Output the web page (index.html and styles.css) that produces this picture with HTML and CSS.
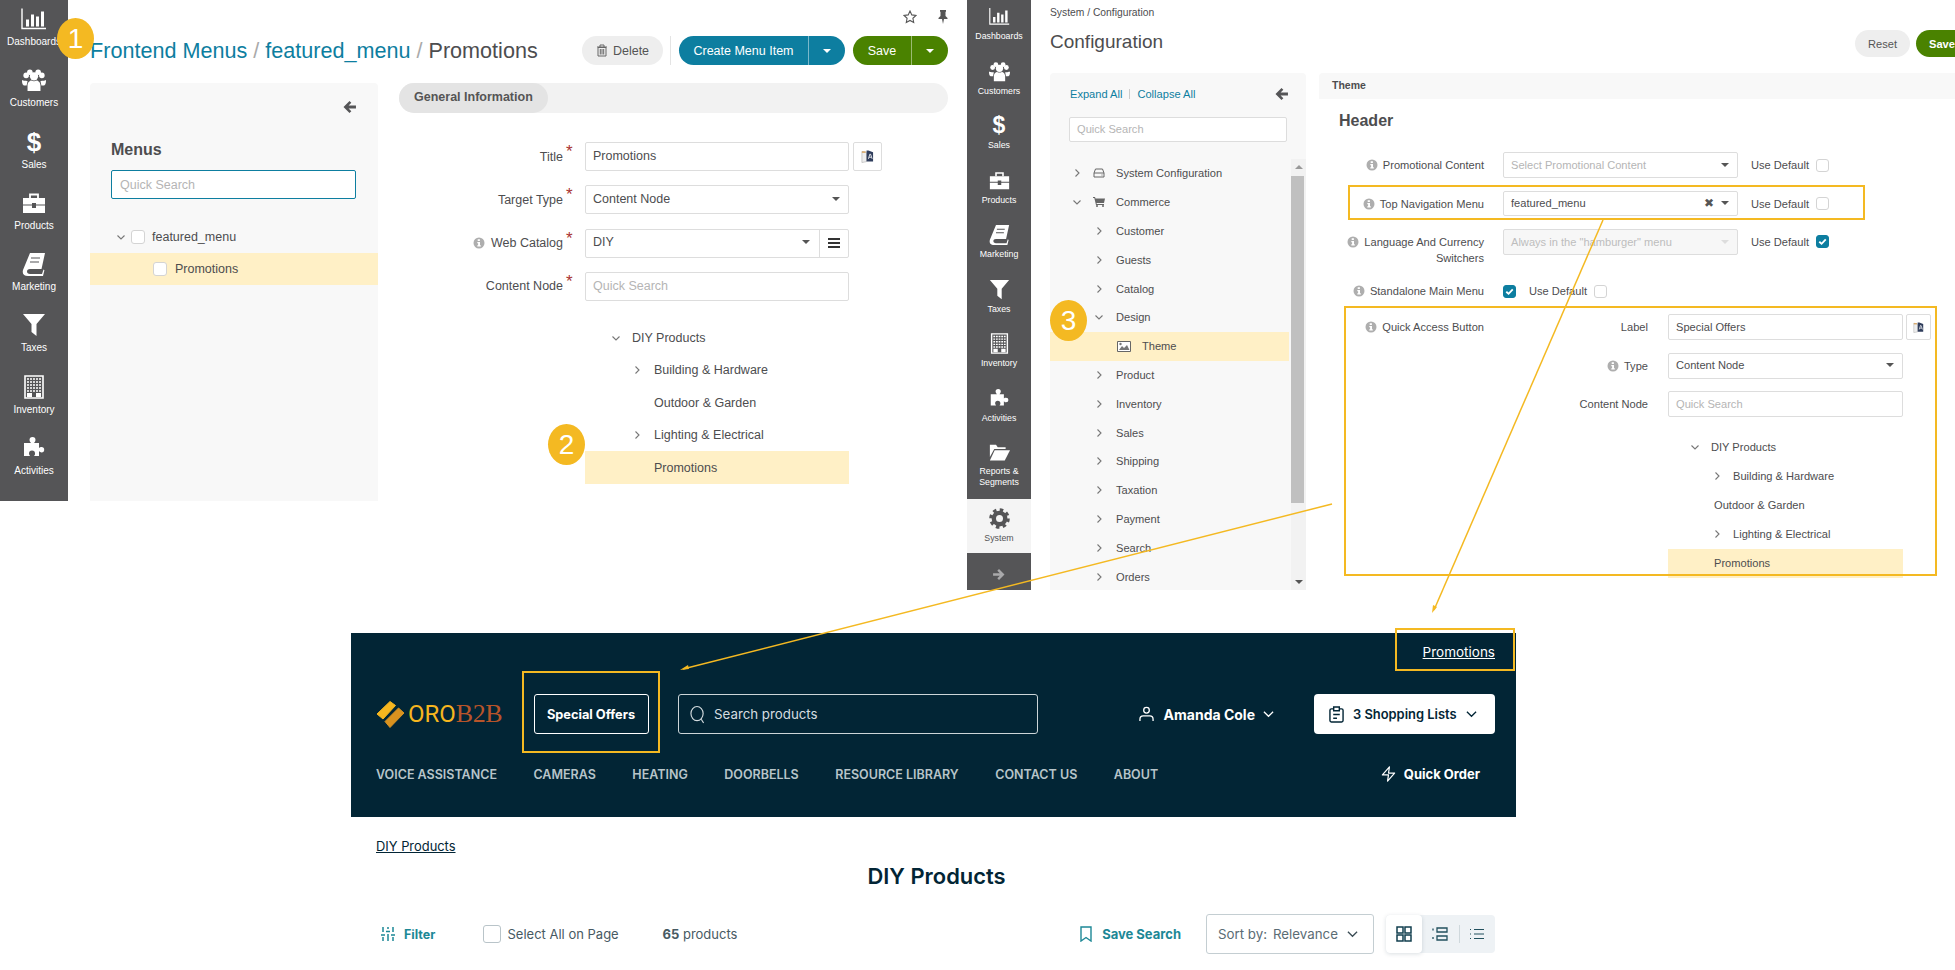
FILE: index.html
```html
<!DOCTYPE html>
<html lang="en">
<head>
<meta charset="utf-8">
<title>Frontend menus</title>
<link rel="stylesheet" href="styles.css">
</head>
<body>
<svg class="sprite" aria-hidden="true">
  <symbol id="i-bars" viewBox="0 0 26 21"><path d="M1 0v20h24" fill="none" stroke="currentColor" stroke-width="1.4"/><path d="M5 11h3v7H5zM10 6h3v12h-3zM15 8h3v10h-3zM20 3h3v15h-3z" fill="currentColor"/></symbol>
  <symbol id="i-users" viewBox="0 0 26 24"><g fill="currentColor"><circle cx="4.5" cy="7" r="3"/><circle cx="21.500" cy="7" r="3"/><circle cx="8.500" cy="3.500" r="3"/><circle cx="17.500" cy="3.500" r="3"/><circle cx="13" cy="8" r="4.500"/><path d="M0 12c1 1 6 1 6 1l-1 5H2c-2-1-2-4-2-6zM26 12c-1 1-6 1-6 1l1 5h3c2-1 2-4 2-6zM6 24v-6c0-4 3-5.500 4-5.500 2 1 4 1 6 0 1 0 4 1.500 4 5.500v6z"/></g></symbol>
  <symbol id="i-case" viewBox="0 0 24 20"><g fill="currentColor"><path d="M1 5h22v6.500H14V10h-4v1.500H1z"/><path d="M1 12.500h9V15h4v-2.500h9V20H1z"/></g><path d="M8 5V1.500h8V5" fill="none" stroke="currentColor" stroke-width="1.800"/></symbol>
  <symbol id="i-book" viewBox="0 0 24 24"><path d="M8 1h15l-3.500 16H8c-2 0-3 1-3 2.500S6 22 8 22h12l1.500-4.500.9.800L21 24H6c-4 0-6-2-5-6z" fill="currentColor"/><path d="M9 6h9M8 10h9" stroke="#555557" stroke-width="1.200"/></symbol>
  <symbol id="i-filter" viewBox="0 0 24 24"><path d="M1 1h22l-8.500 10v12l-5-4v-8z" fill="currentColor"/></symbol>
  <symbol id="i-building" viewBox="0 0 20 24"><path d="M1 1h18v22H1z" fill="#555557" stroke="currentColor" stroke-width="1.600"/><path d="M3 4h14M3 7h14M3 10h14M3 13h14M3 16h14" stroke="currentColor" stroke-width="1.700" stroke-dasharray="2 1"/><path d="M3 18h5v4H3zM12 18h5v4h-5z" fill="currentColor"/></symbol>
  <symbol id="i-puzzle" viewBox="0 0 24 22"><path d="M9 6c-1-1-1.500-2-1.500-3a3 3 0 0 1 6 0c0 1-.5 2-1.500 3h5v5c1-1 1.500-1 2.500-1a2.700 2.700 0 0 1 0 5.400c-1 0-1.500-.4-2.500-1.400v5h-5c1-1 1-1.500 1-2.500a3 3 0 0 0-6 0c0 1 .5 1.500 1 2.500H2V6z" fill="currentColor"/></symbol>
  <symbol id="i-folder" viewBox="0 0 24 20"><path d="M1 1h7l2 3h9v2H6L1 15z" fill="currentColor"/><path d="M6.500 7.500H24L18 19H1z" fill="currentColor"/></symbol>
  <symbol id="i-gear" viewBox="0 0 24 24"><circle cx="12" cy="12" r="6.500" fill="none" stroke="currentColor" stroke-width="5"/><circle cx="12" cy="12" r="10" fill="none" stroke="currentColor" stroke-width="3.500" stroke-dasharray="4 3.850"/></symbol>
  <symbol id="i-back" viewBox="0 0 14 13"><path d="M7 0l2 2-3 3h8v3H6l3 3-2 2-6.500-6.500z" fill="currentColor"/></symbol>
  <symbol id="i-fwd" viewBox="0 0 14 13"><path d="M7 0L5 2l3 3H0v3h8l-3 3 2 2 6.500-6.500z" fill="currentColor"/></symbol>
  <symbol id="i-down" viewBox="0 0 10 10"><path d="M1.500 3.500L5 7l3.500-3.500" fill="none" stroke="currentColor" stroke-width="1.100"/></symbol>
  <symbol id="i-right" viewBox="0 0 10 10"><path d="M3.500 1.500L7 5 3.500 8.500" fill="none" stroke="currentColor" stroke-width="1.100"/></symbol>
  <symbol id="i-info" viewBox="0 0 12 12"><circle cx="6" cy="6" r="5.500" fill="#aeaeae"/><path d="M4.700 2.300h2.200v1.600H4.700zM4.300 5h2.700v3.300h.8v1.200H4.300V8.300h.8V6.200h-.8z" fill="#fff"/></symbol>
  <symbol id="i-check" viewBox="0 0 14 14"><path d="M3.500 7.300L6 9.500l4.500-4.700" fill="none" stroke="#fff" stroke-width="2"/></symbol>
  <symbol id="i-lang" viewBox="0 0 14 15"><path d="M1 2l5 1v10l-5 1z" fill="#eee" stroke="#bbb" stroke-width=".8"/><path d="M1 2h4v1.500H1z" fill="#d9a25a"/><path d="M6 1h2l5 2v10H6z" fill="#2f3d5c"/><path d="M8 10l1.500-5h.8L12 10M8.700 8.300h2.500" fill="none" stroke="#fff" stroke-width=".9"/></symbol>
  <symbol id="i-search" viewBox="0 0 16 20"><ellipse cx="7.500" cy="9" rx="6.500" ry="7.500" fill="none" stroke="currentColor" stroke-width="1.200"/><path d="M12 15l2.500 4" stroke="currentColor" stroke-width="1.200"/></symbol>
  <symbol id="i-user" viewBox="0 0 16 16"><circle cx="8" cy="4" r="3" fill="none" stroke="currentColor" stroke-width="1.400"/><path d="M1 15.500v-2c0-2 1.500-3.500 3.500-3.500h7c2 0 3.500 1.500 3.500 3.500v2" fill="none" stroke="currentColor" stroke-width="1.400"/></symbol>
  <symbol id="i-clip" viewBox="0 0 16 18"><path d="M4.500 3H2.500A1.500 1.500 0 0 0 1 4.500v11A1.500 1.500 0 0 0 2.500 17h11a1.500 1.500 0 0 0 1.500-1.500v-11A1.500 1.500 0 0 0 13.500 3h-2" fill="none" stroke="currentColor" stroke-width="1.500"/><path d="M5 1h6v4H5zM4.500 9h7M4.500 13h4" fill="none" stroke="currentColor" stroke-width="1.500"/></symbol>
  <symbol id="i-bolt" viewBox="0 0 16 17"><path d="M9 1L1.500 9.500H8L7 16l7.500-8.500H8z" fill="none" stroke="currentColor" stroke-width="1.300" stroke-linejoin="round"/></symbol>
  <symbol id="i-sliders" viewBox="0 0 16 16"><path d="M3 1v5M3 11v4M8 1v2M8 8v7M13 1v5M13 11v4M1 9h4M6 5.500h4M11 9h4" fill="none" stroke="currentColor" stroke-width="1.500"/></symbol>
  <symbol id="i-mark" viewBox="0 0 12 16"><path d="M1 1h10v14l-5-3.500L1 15z" fill="none" stroke="currentColor" stroke-width="1.400"/></symbol>
  <symbol id="i-chev" viewBox="0 0 12 8"><path d="M1 1.500l5 5 5-5" fill="none" stroke="currentColor" stroke-width="1.400"/></symbol>
  <symbol id="i-grid" viewBox="0 0 16 16"><path d="M1 1h6v6H1zM9 1h6v6H9zM1 9h6v6H1zM9 9h6v6H9z" fill="none" stroke="currentColor" stroke-width="1.500"/></symbol>
  <symbol id="i-rows" viewBox="0 0 16 14"><path d="M1 1.500v2M1 10v2M5 1h10v4H5zM5 9h10v4H5z" fill="none" stroke="currentColor" stroke-width="1.300"/></symbol>
  <symbol id="i-list" viewBox="0 0 16 12"><path d="M1 1.500h1M1 6h1M1 10.500h1M5 1.500h10M5 6h10M5 10.500h10" fill="none" stroke="currentColor" stroke-width="1.200"/></symbol>
</svg>

<div class="canvas">

  <section class="shot shot-menus">
    <nav class="rail rail-a">
      <a class="rail-item"><svg class="ri ri-bars"><use href="#i-bars"/></svg><span>Dashboards</span></a>
      <a class="rail-item"><svg class="ri"><use href="#i-users"/></svg><span>Customers</span></a>
      <a class="rail-item"><span class="ri dollar">$</span><span>Sales</span></a>
      <a class="rail-item"><svg class="ri"><use href="#i-case"/></svg><span>Products</span></a>
      <a class="rail-item"><svg class="ri"><use href="#i-book"/></svg><span>Marketing</span></a>
      <a class="rail-item"><svg class="ri"><use href="#i-filter"/></svg><span>Taxes</span></a>
      <a class="rail-item"><svg class="ri"><use href="#i-building"/></svg><span>Inventory</span></a>
      <a class="rail-item"><svg class="ri"><use href="#i-puzzle"/></svg><span>Activities</span></a>
    </nav>
    <div class="menus-main">
      <div class="page-tools">
        <svg class="tool-star" viewBox="0 0 14 14"><path d="M7 1l1.800 3.900 4.200.5-3.100 2.900.8 4.200L7 10.400 3.300 12.500l.8-4.200L1 5.400l4.200-.5z" fill="none" stroke="#555" stroke-width="1.100"/></svg>
        <svg class="tool-pin" viewBox="0 0 10 14"><path d="M2 0h6v1.500L7.500 2v4l2 2v1H6l-1 5-1-5H.5V8l2-2V2L2 1.500z" fill="#555"/></svg>
      </div>
      <header class="menus-head">
        <h1 class="crumb-title"><a>Frontend Menus</a> <i>/</i> <a>featured_menu</a> <i>/</i> Promotions</h1>
        <div class="actions">
          <button class="btn btn-delete"><svg class="trash" viewBox="0 0 12 13"><path d="M1 3h10M4 3V1h4v2M2 3.500h8V12H2zM4.300 5v5.500M6 5v5.500M7.700 5v5.500" fill="none" stroke="#666" stroke-width="1"/></svg>Delete</button>
          <span class="action-sep"></span>
          <div class="split split-teal split-create"><span class="split-main">Create Menu Item</span><span class="split-caret"><b class="caret caret-white"></b></span></div>
          <div class="split split-green split-save"><span class="split-main">Save</span><span class="split-caret"><b class="caret caret-white"></b></span></div>
        </div>
      </header>
      <div class="menus-body">
        <aside class="menus-side">
          <div class="side-back"><svg class="back"><use href="#i-back"/></svg></div>
          <h2 class="side-title">Menus</h2>
          <div class="quick quick-focus">Quick Search</div>
          <div class="side-tree">
            <div class="side-row side-root"><svg class="chev"><use href="#i-down"/></svg><span class="cb"></span>featured_menu</div>
            <div class="side-row side-sel"><span class="cb"></span>Promotions</div>
          </div>
        </aside>
        <div class="menus-form">
          <div class="tabs"><span class="tab-on">General Information</span></div>
          <div class="form-grid">
            <label class="lab">Title</label><span class="req">*</span>
            <div class="field">Promotions</div>
            <span class="lang-btn"><svg class="lang"><use href="#i-lang"/></svg></span>
            <label class="lab">Target Type</label><span class="req">*</span>
            <div class="field">Content Node<b class="caret"></b></div>
            <span></span>
            <label class="lab"><svg class="info"><use href="#i-info"/></svg>Web Catalog</label><span class="req">*</span>
            <div class="field field-combo"><span class="combo-main">DIY<b class="caret"></b></span><span class="combo-menu"><b></b><b></b><b></b></span></div>
            <span></span>
            <label class="lab">Content Node</label><span class="req">*</span>
            <div class="field field-ph">Quick Search</div>
            <span></span>
          </div>
          <div class="form-tree">
            <div class="ft-row ft-root"><svg class="chev"><use href="#i-down"/></svg>DIY Products</div>
            <div class="ft-row ft-child"><svg class="chev"><use href="#i-right"/></svg>Building &amp; Hardware</div>
            <div class="ft-row ft-leaf">Outdoor &amp; Garden</div>
            <div class="ft-row ft-child"><svg class="chev"><use href="#i-right"/></svg>Lighting &amp; Electrical</div>
            <div class="ft-row ft-leaf ft-sel">Promotions</div>
          </div>
        </div>
      </div>
    </div>
  </section>

  <section class="shot shot-config">
    <nav class="rail rail-b">
      <a class="rail-item"><svg class="ri ri-bars"><use href="#i-bars"/></svg><span>Dashboards</span></a>
      <a class="rail-item"><svg class="ri"><use href="#i-users"/></svg><span>Customers</span></a>
      <a class="rail-item"><span class="ri dollar">$</span><span>Sales</span></a>
      <a class="rail-item"><svg class="ri"><use href="#i-case"/></svg><span>Products</span></a>
      <a class="rail-item"><svg class="ri"><use href="#i-book"/></svg><span>Marketing</span></a>
      <a class="rail-item"><svg class="ri"><use href="#i-filter"/></svg><span>Taxes</span></a>
      <a class="rail-item"><svg class="ri"><use href="#i-building"/></svg><span>Inventory</span></a>
      <a class="rail-item"><svg class="ri"><use href="#i-puzzle"/></svg><span>Activities</span></a>
      <a class="rail-item rail-reports"><svg class="ri"><use href="#i-folder"/></svg><span>Reports &amp;<br>Segments</span></a>
      <a class="rail-item rail-system"><svg class="ri"><use href="#i-gear"/></svg><span>System</span></a>
      <a class="rail-expand"><svg class="fwd"><use href="#i-fwd"/></svg></a>
    </nav>
    <div class="config-main">
      <div class="config-crumb">System / Configuration</div>
      <header class="config-head">
        <h1>Configuration</h1>
        <div class="config-actions"><button class="btn-sm btn-reset">Reset</button><button class="btn-sm btn-green">Save</button></div>
      </header>
      <div class="config-body">
        <aside class="config-side">
          <div class="expand-row"><a>Expand All</a><span class="expand-sep"></span><a>Collapse All</a><svg class="back"><use href="#i-back"/></svg></div>
          <div class="quick quick-sm">Quick Search</div>
          <div class="cs-wrap">
            <div class="cs-list">
              <div class="cs-row cs-l0"><svg class="chev"><use href="#i-right"/></svg><svg class="cs-ic" viewBox="0 0 12 10"><path d="M2.500 1h7L11 5v4H1V5zM1 5h10M8.500 7h1" fill="none" stroke="#666" stroke-width="1"/></svg>System Configuration</div>
              <div class="cs-row cs-l0"><svg class="chev"><use href="#i-down"/></svg><svg class="cs-ic" viewBox="0 0 12 10"><path d="M0 0h2l.5 1.500H12l-1 4.500H3.500l.3 1H11v1H3L1.300 1H0z" fill="#666"/><circle cx="4" cy="9" r="1" fill="#666"/><circle cx="10" cy="9" r="1" fill="#666"/></svg>Commerce</div>
              <div class="cs-row cs-l1"><svg class="chev"><use href="#i-right"/></svg>Customer</div>
              <div class="cs-row cs-l1"><svg class="chev"><use href="#i-right"/></svg>Guests</div>
              <div class="cs-row cs-l1"><svg class="chev"><use href="#i-right"/></svg>Catalog</div>
              <div class="cs-row cs-l1"><svg class="chev"><use href="#i-down"/></svg>Design</div>
              <div class="cs-row cs-theme"><svg class="cs-pic" viewBox="0 0 14 11"><path d="M.5.500h13v10H.5z" fill="#fff" stroke="#666"/><path d="M2 9l3-4 2 2 3-3 2.500 5z" fill="#777"/><circle cx="3.500" cy="3" r="1.200" fill="#777"/></svg>Theme</div>
              <div class="cs-row cs-l1"><svg class="chev"><use href="#i-right"/></svg>Product</div>
              <div class="cs-row cs-l1"><svg class="chev"><use href="#i-right"/></svg>Inventory</div>
              <div class="cs-row cs-l1"><svg class="chev"><use href="#i-right"/></svg>Sales</div>
              <div class="cs-row cs-l1"><svg class="chev"><use href="#i-right"/></svg>Shipping</div>
              <div class="cs-row cs-l1"><svg class="chev"><use href="#i-right"/></svg>Taxation</div>
              <div class="cs-row cs-l1"><svg class="chev"><use href="#i-right"/></svg>Payment</div>
              <div class="cs-row cs-l1"><svg class="chev"><use href="#i-right"/></svg>Search</div>
              <div class="cs-row cs-l1"><svg class="chev"><use href="#i-right"/></svg>Orders</div>
            </div>
            <div class="scroll"><span class="scroll-end"><b class="caret caret-up"></b></span><span class="scroll-thumb"></span><span class="scroll-end scroll-last"><b class="caret caret-dark"></b></span></div>
          </div>
        </aside>
        <div class="config-form">
          <div class="theme-bar">Theme</div>
          <h2 class="section-title">Header</h2>
          <div class="cfg-rows">
            <div class="cfg-row">
              <label class="cfg-lab"><svg class="info"><use href="#i-info"/></svg>Promotional Content</label>
              <div class="sel sel-ph">Select Promotional Content<b class="caret"></b></div>
              <div class="use">Use Default<span class="cb"></span></div>
            </div>
            <div class="cfg-row cfg-short">
              <label class="cfg-lab"><svg class="info"><use href="#i-info"/></svg>Top Navigation Menu</label>
              <div class="sel sel-dark">featured_menu<span class="sel-x">✖</span><b class="caret caret-tight"></b></div>
              <div class="use">Use Default<span class="cb"></span></div>
            </div>
            <div class="cfg-row cfg-tall">
              <label class="cfg-lab cfg-lab-two"><span class="two-first"><svg class="info"><use href="#i-info"/></svg>Language And Currency</span><span>Switchers</span></label>
              <div class="sel sel-off">Always in the "hamburger" menu<b class="caret caret-pale"></b></div>
              <div class="use">Use Default<span class="cb cb-on"><svg><use href="#i-check"/></svg></span></div>
            </div>
            <div class="cfg-row cfg-stand">
              <label class="cfg-lab"><svg class="info"><use href="#i-info"/></svg>Standalone Main Menu</label>
              <div class="stand"><span class="cb cb-on"><svg><use href="#i-check"/></svg></span><div class="use use-flush">Use Default<span class="cb"></span></div></div>
            </div>
            <div class="cfg-row cfg-quick">
              <label class="cfg-lab cfg-lab-q"><svg class="info"><use href="#i-info"/></svg>Quick Access Button</label>
              <div class="quick-fields">
                <div class="qf-grid">
                  <label class="qf-lab">Label</label><div class="sel sel-dark">Special Offers</div><span class="lang-btn lang-btn-sm"><svg class="lang lang-sm"><use href="#i-lang"/></svg></span>
                  <label class="qf-lab"><svg class="info"><use href="#i-info"/></svg>Type</label><div class="sel sel-dark">Content Node<b class="caret"></b></div><span></span>
                  <label class="qf-lab">Content Node</label><div class="sel sel-ph">Quick Search</div><span></span>
                </div>
                <div class="qf-tree">
                  <div class="qt-row qt-root"><svg class="chev"><use href="#i-down"/></svg>DIY Products</div>
                  <div class="qt-row qt-child"><svg class="chev"><use href="#i-right"/></svg>Building &amp; Hardware</div>
                  <div class="qt-row qt-leaf">Outdoor &amp; Garden</div>
                  <div class="qt-row qt-child"><svg class="chev"><use href="#i-right"/></svg>Lighting &amp; Electrical</div>
                  <div class="qt-row qt-leaf qt-sel">Promotions</div>
                </div>
              </div>
            </div>
          </div>
        </div>
      </div>
    </div>
  </section>

  <section class="shot shot-store">
    <header class="sf-head">
      <div class="sf-top"><a class="sf-promo">Promotions</a></div>
      <div class="sf-main">
        <div class="logo">
          <svg class="logo-mark" viewBox="0 0 29 30"><path d="M1 15L14 2.500l5.500 4L7 20z" fill="#f6b61f" stroke="#f6b61f" stroke-linejoin="round"/><path d="M9 22.500L22.500 9l5.500 5-14 14.500z" fill="#d9921f" stroke="#d9921f" stroke-linejoin="round"/></svg>
          <span class="logo-text"><span class="logo-a">ORO</span><span class="logo-b">B2B</span></span>
        </div>
        <a class="sf-offer">Special Offers</a>
        <div class="sf-search"><svg class="sf-search-ic"><use href="#i-search"/></svg>Search products</div>
        <div class="sf-user"><svg class="sf-user-ic"><use href="#i-user"/></svg><span>Amanda Cole</span><svg class="sf-chev"><use href="#i-chev"/></svg></div>
        <div class="sf-lists"><svg class="sf-clip"><use href="#i-clip"/></svg><span>3 Shopping Lists</span><svg class="sf-chev"><use href="#i-chev"/></svg></div>
      </div>
      <nav class="sf-nav">
        <a>VOICE ASSISTANCE</a><a>CAMERAS</a><a>HEATING</a><a>DOORBELLS</a><a>RESOURCE LIBRARY</a><a>CONTACT US</a><a>ABOUT</a>
        <span class="sf-quick"><svg class="sf-bolt"><use href="#i-bolt"/></svg>Quick Order</span>
      </nav>
    </header>
    <div class="sf-page">
      <a class="sf-crumb">DIY Products</a>
      <h1 class="sf-title">DIY Products</h1>
      <div class="sf-tools">
        <span class="sf-filter"><svg class="sf-sliders"><use href="#i-sliders"/></svg>Filter</span>
        <span class="sf-all"><span class="sf-box"></span>Select All on Page</span>
        <span class="sf-count"><b>65</b> products</span>
        <span class="sf-save"><svg class="sf-mark"><use href="#i-mark"/></svg>Save Search</span>
        <div class="sf-sort"><span>Sort by:</span><span>Relevance</span><svg class="sf-chev"><use href="#i-chev"/></svg></div>
        <div class="sf-views">
          <span class="view view-on"><svg class="v-ic"><use href="#i-grid"/></svg></span>
          <span class="view"><svg class="v-ic"><use href="#i-rows"/></svg></span>
          <span class="view view-sep"><svg class="v-ic"><use href="#i-list"/></svg></span>
        </div>
      </div>
    </div>
  </section>

  <svg class="callouts" viewBox="0 0 1955 970">
    <path class="call-line" d="M1332 504L683 669"/>
    <path class="call-head" d="M680 670l8-5 1 4z"/>
    <path class="call-line" d="M1603 220L1434 610"/>
    <path class="call-head" d="M1432 613l1-8 4 2z"/>
  </svg>
  <div class="hl hl-nav"></div>
  <div class="hl hl-quick"></div>
  <div class="hl hl-offer"></div>
  <div class="hl hl-promo"></div>
  <span class="badge badge-1">1</span>
  <span class="badge badge-2">2</span>
  <span class="badge badge-3">3</span>
</div>
</body>
</html>
```
FILE: styles.css
```css
* { box-sizing: border-box; }
html, body { margin: 0; padding: 0; background: #fff; }
body { font-family: "Liberation Sans", Arial, sans-serif; color: #4d4d4f; overflow: hidden; }
h1, h2 { margin: 0; font-weight: normal; }
button { font: inherit; border: 0; }
.sprite { display: none; }
.canvas { position: relative; width: 1955px; height: 970px; overflow: hidden; background: #fff; }
.shot { position: absolute; overflow: hidden; }
.shot-menus { left: 0; top: 0; width: 950px; height: 501px; display: flex; font-size: 12.5px; }
.shot-config { left: 967px; top: 0; width: 988px; height: 590px; display: flex; font-size: 11.1px; }
.shot-store { left: 351px; top: 633px; width: 1165px; height: 337px; font-family: Inter, sans-serif; }

/* rails */
.rail { background: #555557; color: #fff; flex: none; display: flex; flex-direction: column; }
.rail-a { width: 68px; }
.rail-b { width: 64px; }
.rail-item { display: flex; flex-direction: column; align-items: center; flex: none; }
.rail-a .rail-item { height: 61.3px; padding-top: 7px; font-size: 10px; line-height: 14px; }
.rail-b .rail-item { height: 54.5px; padding-top: 5px; font-size: 8.8px; line-height: 14px; text-align: center; }
.ri { width: 24px; height: 24px; display: block; flex: none; }
.ri-bars { width: 26px; height: 22px; margin: 1px 0; }
.rail-a .rail-item span:last-child { margin-top: 4px; }
.rail-b .ri { width: 21px; height: 21px; margin: 1px 0 2px; }
.dollar { font-size: 26px; font-weight: bold; line-height: 24px; text-align: center; }
.rail-b .dollar { font-size: 23px; line-height: 21px; width: 24px; }
.rail-b .rail-reports { height: 63px; padding-top: 5px; line-height: 11px; }
.rail-reports span { margin-top: 1px; }
.rail-b .rail-system { height: 54px; padding-top: 8px; background: #f4f4f4; color: #555557; }
.rail-expand { flex: 1; display: flex; align-items: center; justify-content: center; color: #a9a9ab; padding-top: 5px; }
.fwd { width: 12px; height: 11px; }

/* common */
.back { width: 13px; height: 12px; color: #555557; display: block; }
.chev { width: 10px; height: 10px; color: #777; flex: none; }
.caret { display: block; margin-left: auto; width: 0; height: 0; border-left: 4px solid transparent; border-right: 4px solid transparent; border-top: 4px solid #555; flex: none; }
.caret-white { margin: 0; border-top-color: #fff; }
.caret-up { margin: 0; border-top: 0; border-bottom: 4px solid #999; }
.caret-dark { margin: 0; }
.caret-tight { margin-left: 7px; }
.caret-pale { border-top-color: #ddd; }
.cb { display: inline-block; width: 14px; height: 14px; background: #fff; border: 1px solid #d4d4d4; border-radius: 3px; flex: none; }
.cb svg { display: block; width: 14px; height: 14px; margin: -1px; }
.cb-on { background: #0d7ea0; border-color: #0d7ea0; }
.info { width: 12px; height: 12px; flex: none; }
.req { color: #a33; font-size: 17px; line-height: 14px; padding-left: 3px; }

/* menus window */
.menus-main { width: 882px; padding-left: 22px; padding-right: 2px; display: flex; flex-direction: column; }
.page-tools { height: 36px; display: flex; justify-content: flex-end; align-items: flex-start; gap: 21px; padding-top: 10px; }
.tool-star { width: 14px; height: 14px; }
.tool-pin { width: 10px; height: 14px; }
.menus-head { height: 29px; display: flex; justify-content: space-between; align-items: center; margin-bottom: 18px; }
.crumb-title { font-size: 21.6px; line-height: 26px; color: #4d4d4f; white-space: nowrap; }
.crumb-title a { color: #0d7ea0; }
.crumb-title i { font-style: normal; color: #aaa; }
.actions { display: flex; align-items: center; height: 29px; }
.btn { height: 29px; border-radius: 15px; display: flex; align-items: center; justify-content: center; }
.btn-delete { width: 81px; background: #eeeeee; color: #555; gap: 5px; font-size: 12.5px; }
.trash { width: 12px; height: 13px; }
.action-sep { width: 1px; height: 29px; background: #e4e4e4; margin: 0 8px 0 7px; }
.split { height: 29px; display: flex; border-radius: 15px; color: #fff; overflow: hidden; }
.split-main { display: flex; align-items: center; justify-content: center; border-right: 1px solid rgba(255,255,255,.45); }
.split-caret { display: flex; align-items: center; justify-content: center; }
.split-teal { background: #0d7ea0; }
.split-green { background: #4a8200; }
.split-create { width: 166px; margin-right: 8px; }
.split-create .split-main { width: 130px; }
.split-create .split-caret { width: 36px; }
.split-save { width: 95px; }
.split-save .split-main { width: 59px; }
.split-save .split-caret { width: 36px; }
.menus-body { display: flex; gap: 21px; flex: 1; }
.menus-side { width: 288px; background: #f8f8f8; border-radius: 4px 4px 0 0; padding: 16px 22px 0 21px; }
.side-back { height: 16px; display: flex; justify-content: flex-end; align-items: center; }
.side-title { font-size: 16px; font-weight: bold; line-height: 20px; margin-top: 25px; color: #4d4d4f; }
.quick { background: #fff; border: 1px solid #ddd; border-radius: 2px; color: #b5b5b5; display: flex; align-items: center; }
.quick-focus { height: 29px; margin-top: 10px; padding-left: 8px; border-color: #0d7ea0; }
.side-tree { margin: 22px -22px 0 -21px; }
.side-row { height: 32px; display: flex; align-items: center; }
.side-root { padding-left: 26px; }
.side-root .chev { margin-right: 5px; }
.side-root .cb { margin-right: 7px; }
.side-sel { background: #fff0c6; padding-left: 63px; }
.side-sel .cb { margin-right: 8px; }
.menus-form { width: 549px; }
.tabs { height: 30px; background: #f2f2f2; border-radius: 15px; }
.tab-on { display: flex; align-items: center; width: 149px; height: 30px; padding: 0 0 2px 15px; background: #e4e4e4; border-radius: 15px; font-weight: bold; color: #555; }
.form-grid { margin-top: 29px; display: grid; grid-template-columns: 164px 22px 264px 33px; grid-auto-rows: 29px; row-gap: 14.3px; align-items: center; }
.lab { display: flex; align-items: center; justify-content: flex-end; gap: 6px; }
.form-grid .req { align-self: start; padding-top: 3px; }
.field { height: 29px; background: #fff; border: 1px solid #ddd; border-radius: 2px; padding: 0 8px 2px 7px; display: flex; align-items: center; }
.field-ph { color: #b5b5b5; padding-bottom: 0; }
.field-combo { padding: 0; }
.combo-main { flex: 1; display: flex; align-items: center; padding: 0 9px 2px 7px; height: 100%; }
.combo-menu { width: 29px; height: 100%; border-left: 1px solid #ddd; display: flex; flex-direction: column; justify-content: center; align-items: center; gap: 2px; }
.combo-menu b { width: 12px; height: 2px; background: #333; display: block; }
.lang-btn { margin-left: 4px; width: 29px; height: 29px; background: #fff; border: 1px solid #ddd; border-radius: 2px; display: flex; align-items: center; justify-content: center; }
.lang { width: 13px; height: 15px; }
.form-tree { margin: 21px 0 0 186px; width: 264px; }
.ft-row { height: 32.4px; display: flex; align-items: center; }
.ft-root { padding-left: 26px; }
.ft-root .chev { margin-right: 11px; }
.ft-child { padding-left: 47px; }
.ft-child .chev { margin-right: 12px; }
.ft-leaf { padding-left: 69px; }
.ft-sel { background: #fff0c6; }

/* config window */
.config-main { flex: 1; min-width: 0; padding-left: 19px; display: flex; flex-direction: column; }
.config-crumb { height: 20px; padding-top: 6px; font-size: 10.3px; line-height: 14px; }
.config-head { margin-top: 10px; height: 27px; margin-bottom: 16px; display: flex; justify-content: space-between; align-items: flex-start; }
.config-head h1 { font-size: 19px; line-height: 24px; }
.config-actions { display: flex; gap: 6px; margin-right: -21px; }
.btn-sm { height: 27px; border-radius: 14px; font-size: 11.100px; }
.btn-reset { width: 55px; background: #eeeeee; color: #555; }
.btn-green { width: 60px; background: #4a8200; color: #fff; text-align: left; padding-left: 13px; font-weight: bold; }
.config-body { display: flex; gap: 13px; flex: 1; min-height: 0; }
.config-side { width: 256px; flex: none; background: #f8f8f8; border-radius: 4px 4px 0 0; padding-top: 13px; display: flex; flex-direction: column; }
.expand-row { height: 16px; display: flex; align-items: center; padding: 0 18px 0 20px; color: #0d7ea0; }
.expand-sep { width: 1px; height: 10px; background: #ccc; margin: 0 7px; }
.expand-row .back { margin-left: auto; }
.quick-sm { margin: 15px 0 0 19px; width: 218px; height: 24.6px; padding-left: 7px; }
.cs-wrap { margin-top: 17.4px; display: flex; flex: 1; min-height: 0; gap: 2px; }
.cs-list { width: 239px; }
.cs-row { height: 28.8px; display: flex; align-items: center; }
.cs-l0 { padding-left: 22px; }
.cs-l0 .chev { margin-right: 11px; }
.cs-ic { width: 12px; height: 10px; margin-right: 11px; }
.cs-l1 { padding-left: 44px; }
.cs-l1 .chev { margin-right: 12px; }
.cs-theme { padding-left: 67px; background: #fff0c6; }
.cs-pic { width: 14px; height: 11px; margin-right: 11px; }
.scroll { width: 15px; background: #f2f2f2; display: flex; flex-direction: column; }
.scroll-end { height: 17px; display: flex; align-items: center; justify-content: center; flex: none; }
.scroll-thumb { display: block; width: 13px; height: 327px; background: #c0c0c0; }
.scroll-last { margin-top: auto; }
.config-form { flex: 1; min-width: 0; }
.theme-bar { height: 26px; background: #f8f8f8; border-radius: 4px 0 0 0; padding: 0 0 2px 13px; display: flex; align-items: center; font-weight: bold; font-size: 10.5px; }
.section-title { margin: 12px 0 0 20px; font-size: 16px; line-height: 20px; font-weight: bold; }
.cfg-rows { margin-top: 21px; display: flex; flex-direction: column; gap: 13px; }
.cfg-row { display: grid; grid-template-columns: 165px 19px 235px 1fr; align-items: center; height: 26px; }
.cfg-lab { grid-column: 1; display: flex; justify-content: flex-end; align-items: center; gap: 5px; text-align: right; }
.sel { grid-column: 3; height: 26px; background: #fff; border: 1px solid #ddd; border-radius: 2px; padding: 0 8px 1px 7px; display: flex; align-items: center; white-space: nowrap; }
.sel-ph { color: #b5b5b5; }
.sel-off { background: #f7f7f7; color: #bdbdbd; }
.sel-x { margin-left: auto; font-size: 12px; color: #555; }
.use { grid-column: 4; margin-left: 13px; display: flex; align-items: center; gap: 7px; }
.use-flush { margin-left: 0; }
.use .cb, .stand .cb { width: 13px; height: 13px; }
.use .cb svg, .stand .cb svg { width: 13px; height: 13px; }
.cfg-short { height: 25px; }
.cfg-short .sel { height: 25px; }
.cfg-tall { height: 36px; align-items: start; }
.cfg-lab-two { flex-direction: column; align-items: flex-end; gap: 0; line-height: 16px; padding-top: 5px; }
.two-first { display: flex; align-items: center; gap: 5px; }
.cfg-tall .use { padding-top: 6px; }
.stand { grid-column: 3 / span 2; display: flex; align-items: center; gap: 13px; }
.cfg-quick { margin-top: -3px; align-items: start; height: 263px; grid-template-columns: 165px 19px 1fr; }
.cfg-lab-q { height: 26px; }
.quick-fields { grid-column: 3; }
.qf-grid { display: grid; grid-template-columns: 165px 235px 28px; grid-auto-rows: 26px; row-gap: 12.5px; align-items: center; }
.qf-grid .sel { grid-column: auto; }
.qf-lab { display: flex; align-items: center; justify-content: flex-end; gap: 5px; padding-right: 20px; }
.lang-btn-sm { width: 25px; height: 26px; margin-left: 3px; }
.lang-sm { width: 11px; height: 13px; }
.qf-tree { margin: 15.500px 0 0 165px; width: 235px; }
.qt-row { height: 29px; display: flex; align-items: center; }
.qt-root { padding-left: 21.5px; }
.qt-root .chev { margin-right: 11.5px; }
.qt-child { padding-left: 44px; }
.qt-child .chev { margin-right: 11px; }
.qt-leaf { padding-left: 46px; }
.qt-sel { background: #fff0c6; }

/* storefront */
.sf-head { height: 184px; background: #022535; color: #fff; padding: 0 21px 0 25px; }
.sf-top { height: 38px; display: flex; justify-content: flex-end; align-items: center; }
.sf-promo { font-size: 13.500px; text-decoration: underline; color: #fff; }
.sf-main { margin-top: 23px; height: 40px; display: flex; align-items: center; }
.logo { width: 127px; display: flex; align-items: center; gap: 3px; }
.logo-mark { width: 29px; height: 30px; flex: none; }
.logo-text { font-size: 24px; line-height: 28px; white-space: nowrap; }
.logo-a { color: #f6b61f; font-family: Roboto, sans-serif; font-weight: 400; }
.logo-b { color: #b8542a; font-family: "Liberation Serif", serif; font-size: 26px; letter-spacing: -.5px; }
.sf-offer { margin-left: 30.5px; width: 115px; height: 40px; border: 1px solid #fff; border-radius: 3px; display: flex; align-items: center; justify-content: center; font-size: 12.800px; font-weight: 700; }
.sf-search { margin-left: 29.5px; width: 359.5px; height: 40px; border: 1px solid #ccd5d8; border-radius: 3px; display: flex; align-items: center; padding-left: 11px; gap: 9px; font-size: 13.300px; color: #d5dde0; }
.sf-search-ic { width: 15px; height: 19px; color: #d5dde0; }
.sf-user { margin-left: auto; display: flex; align-items: center; gap: 10px; font-size: 14px; font-weight: 700; }
.sf-user-ic { width: 15px; height: 16px; }
.sf-chev { width: 11px; height: 8px; flex: none; }
.sf-lists { margin-left: 40px; width: 181px; height: 40px; border-radius: 4px; background: #fff; color: #022535; display: flex; align-items: center; padding: 0 18px 0 15px; font-size: 12.900px; font-weight: 600; }
.sf-clip { width: 15px; height: 17px; margin-right: 9px; }
.sf-lists .sf-chev { margin-left: auto; }
.sf-user .sf-chev { margin-left: -2px; }
.sf-nav { margin-top: 23px; height: 34px; display: flex; align-items: center; gap: 36.500px; font-size: 12.500px; font-weight: 600; color: #b7c4c9; white-space: nowrap; }
.sf-quick { margin-left: auto; margin-right: 15px; display: flex; align-items: center; gap: 8px; color: #fff; font-size: 13px; font-weight: 700; }
.sf-bolt { width: 15px; height: 16px; }
.sf-page { padding: 21px 21px 0 25px; color: #022535; font-size: 13px; }
.sf-crumb { display: block; width: max-content; line-height: 18px; text-decoration: underline; font-size: 12.900px; }
.sf-title { margin-top: 6px; line-height: 28px; text-align: center; padding-left: 2px; font-size: 21.900px; font-weight: 600; }
.sf-tools { margin-top: 24px; height: 40px; display: flex; align-items: center; white-space: nowrap; color: #475a63; }
.sf-filter { margin-left: 4px; width: 102.5px; flex: none; display: flex; align-items: center; gap: 8px; color: #1d8896; font-weight: 700; font-size: 12.500px; }
.sf-sliders { width: 16px; height: 16px; }
.sf-all { width: 180px; flex: none; display: flex; align-items: center; gap: 7px; font-size: 13px; }
.sf-box { width: 18px; height: 18px; background: #fff; border: 1px solid #b9c4c9; border-radius: 3px; flex: none; }
.sf-count { font-size: 13px; }
.sf-count b { font-weight: 700; }
.sf-save { margin-left: auto; display: flex; align-items: center; gap: 10px; color: #1d8896; font-weight: 700; font-size: 13px; }
.sf-mark { width: 12px; height: 16px; }
.sf-sort { margin-left: 25px; width: 168px; height: 40px; border: 1px solid #c4ced2; border-radius: 3px; display: flex; align-items: center; padding-left: 11px; gap: 6px; font-size: 13.300px; color: #5b6c74; }
.sf-sort .sf-chev { margin-left: auto; margin-right: 15px; color: #3b4d55; }
.sf-views { margin-left: 12px; width: 109px; height: 38px; background: #eef2f5; border-radius: 4px; display: flex; }
.view { flex: 1; display: flex; align-items: center; justify-content: center; color: #22505e; }
.view-on { background: #fff; border-radius: 4px; box-shadow: 0 1px 4px rgba(0,40,60,.15); color: #123f4f; }
.view-sep { position: relative; }
.view-sep::before { content: ""; position: absolute; left: 0; top: 10px; height: 18px; width: 1px; background: #cfd8dc; }
.v-ic { width: 16px; height: 16px; }

/* overlays */
.callouts { position: absolute; left: 0; top: 0; width: 1955px; height: 970px; pointer-events: none; }
.call-line { fill: none; stroke: #f4b922; stroke-width: 1.500; }
.call-head { fill: #f4b922; }
.hl { position: absolute; border: 2px solid #f4b922; pointer-events: none; }
.hl-nav { left: 1348px; top: 185px; width: 517px; height: 35px; }
.hl-quick { left: 1344px; top: 306px; width: 593px; height: 270px; }
.hl-offer { left: 522px; top: 671px; width: 138px; height: 82px; }
.hl-promo { left: 1395px; top: 628px; width: 120px; height: 43px; }
.badge { position: absolute; width: 37px; height: 41px; border-radius: 50%; background: #f4b922; color: #fff; font-size: 28px; line-height: 41px; text-align: center; }
.badge-1 { left: 57px; top: 18px; }
.badge-2 { left: 548px; top: 424px; }
.badge-3 { left: 1050px; top: 300px; }
```
